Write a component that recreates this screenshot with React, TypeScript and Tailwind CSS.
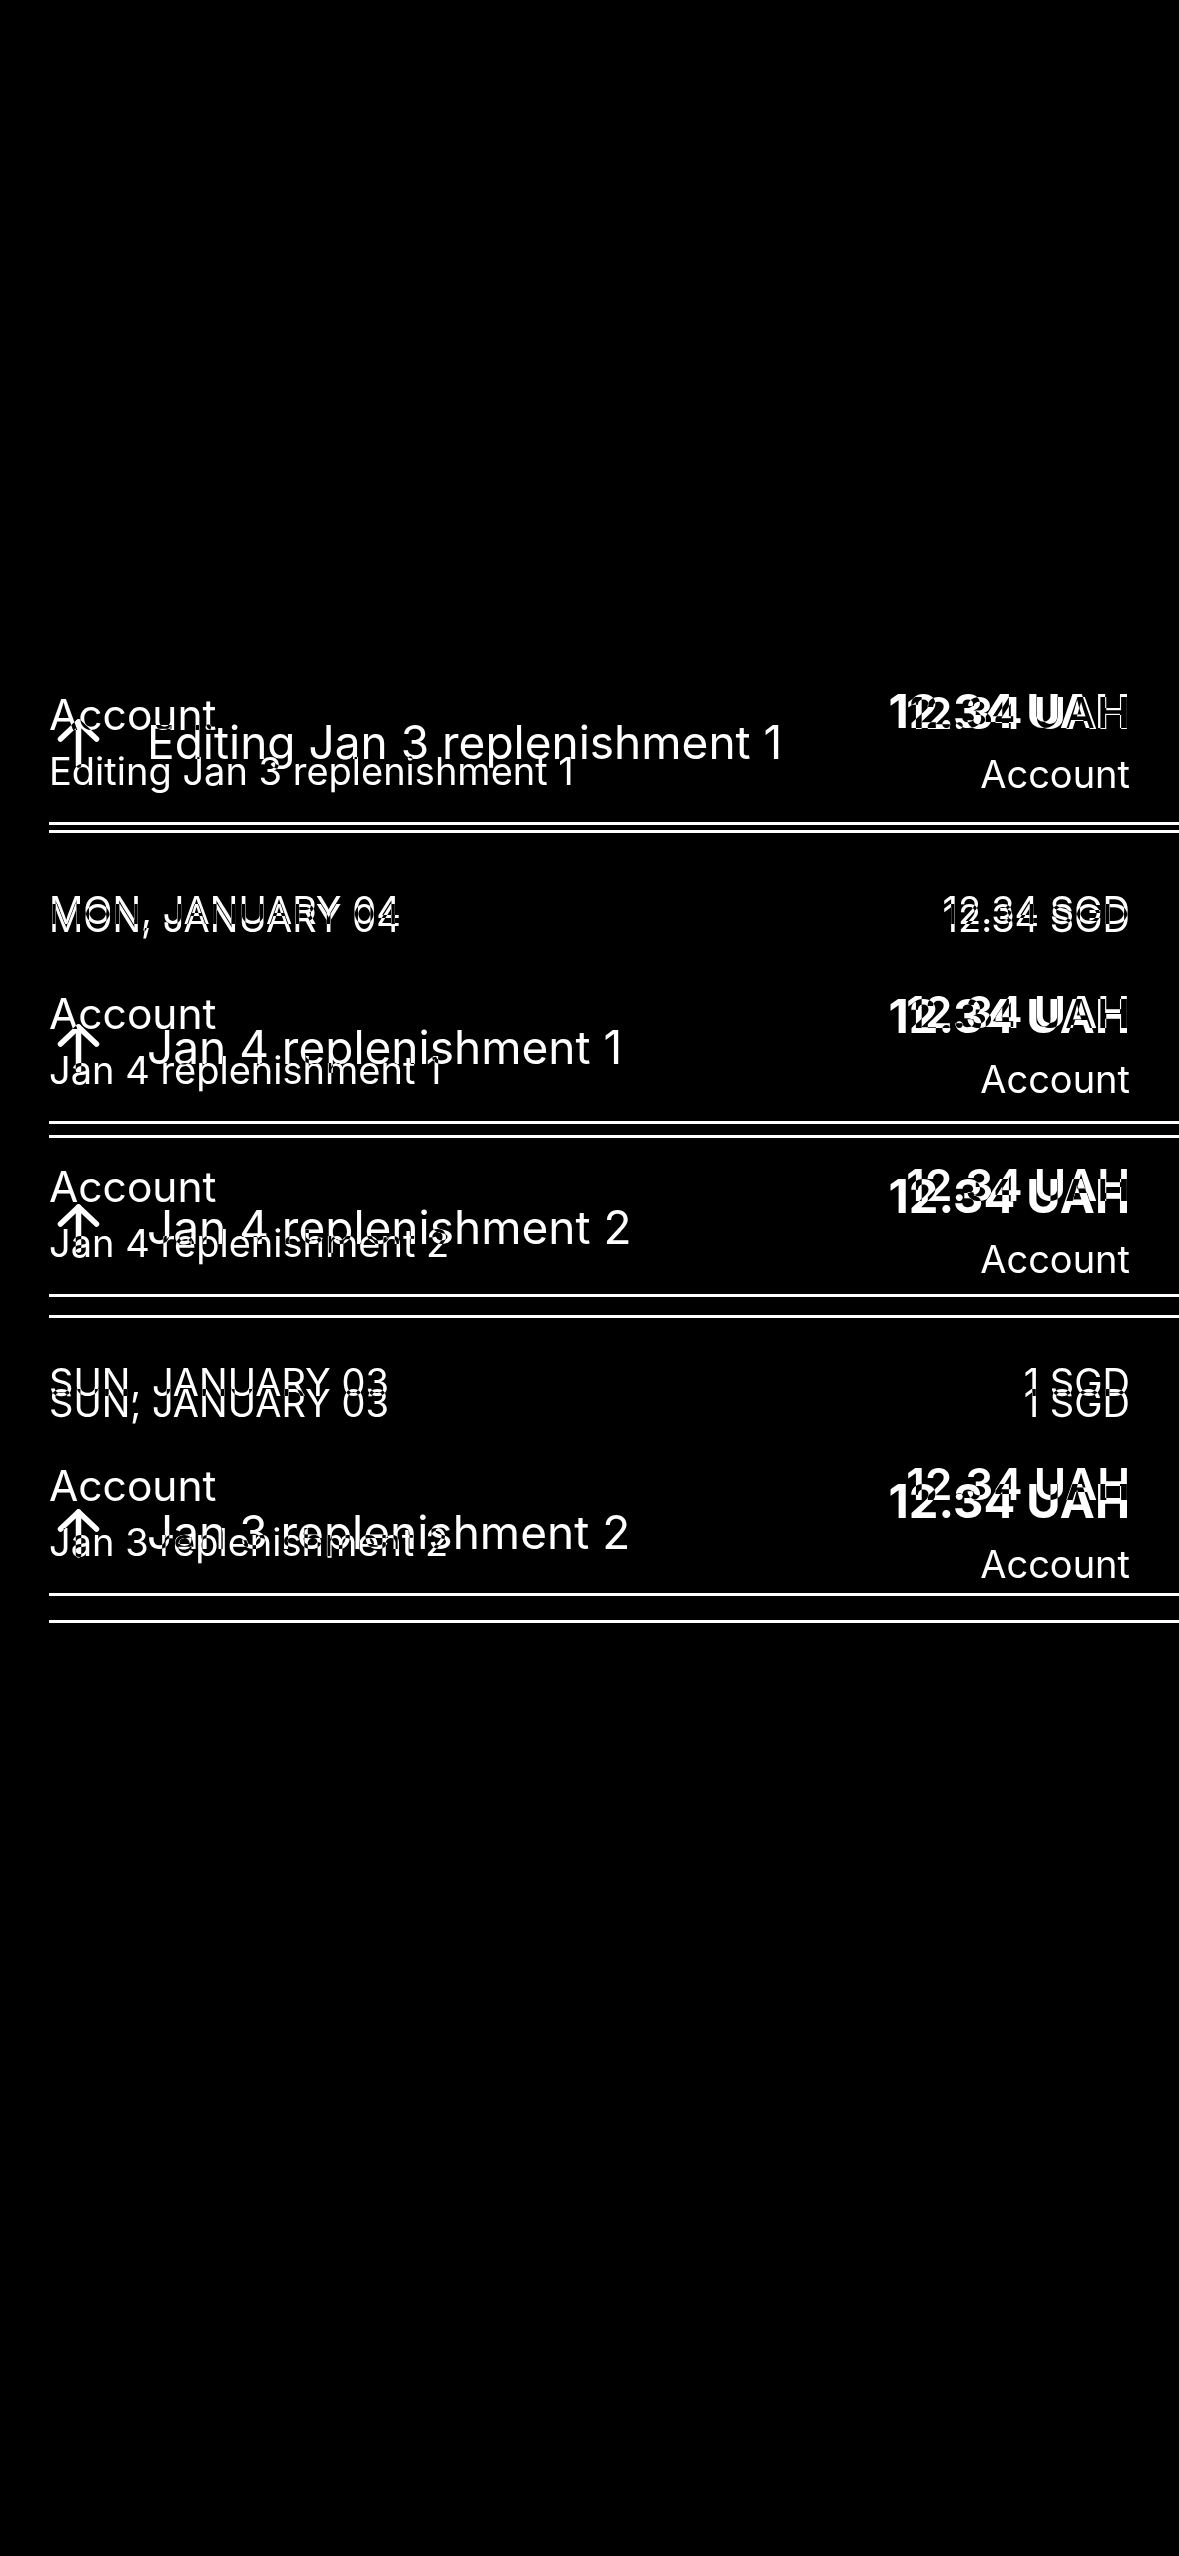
import React from "react";

type Txn = { desc: string; amount: string };
type Section = { date: string; total: string; items: Txn[] };

const sections: Section[] = [
  { date: "", total: "", items: [{ desc: "Editing Jan 3 replenishment 1", amount: "12.34 UAH" }] },
  {
    date: "MON, JANUARY 04",
    total: "12.34 SGD",
    items: [
      { desc: "Jan 4 replenishment 1", amount: "12.34 UAH" },
      { desc: "Jan 4 replenishment 2", amount: "12.34 UAH" },
    ],
  },
  { date: "SUN, JANUARY 03", total: "1 SGD", items: [{ desc: "Jan 3 replenishment 2", amount: "12.34 UAH" }] },
];

function ArrowUp() {
  return (
    <svg width="43" height="50" viewBox="0 0 43 50" fill="none" stroke="currentColor" strokeWidth="5.5" strokeLinecap="round" strokeLinejoin="round">
      <path d="M21.5 4V47" />
      <path d="M3.5 21L21.5 4L39.5 21" />
    </svg>
  );
}

function Separator() {
  return <div className="ml-[49px] h-[3px] bg-white" />;
}

function Header({ date, total, pad }: { date: string; total: string; pad: string }) {
  return (
    <div className={`flex items-end justify-between px-[49px] text-[38px] leading-[44px] ${pad}`}>
      <span>{date}</span>
      <span>{total}</span>
    </div>
  );
}

// list layout: account + note on the left, amount on the right
function ListRow({ t }: { t: Txn }) {
  return (
    <>
      <div className="h-[170px] flex justify-between px-[49px]">
        <div className="pt-[35px]">
          <div className="text-[42.5px] leading-[56px]">Account</div>
          <div className="text-[38px] leading-[56px] whitespace-nowrap">{t.desc}</div>
        </div>
        <div className="pt-[33px] text-right">
          <div className="text-[44px] leading-[56px] font-semibold">{t.amount}</div>
        </div>
      </div>
      <Separator />
    </>
  );
}

// compact layout: icon, title, amount + account
function CompactRow({ t }: { t: Txn }) {
  return (
    <>
      <div className="h-[177px] flex justify-between pl-[57px] pr-[49px]">
        <div className="flex items-start">
          <div className="pt-[65px]">
            <ArrowUp />
          </div>
          <div className="pl-[47px] pt-[59px] text-[46px] leading-[60px] whitespace-nowrap">{t.desc}</div>
        </div>
        <div className="pt-[30px] text-right">
          <div className="text-[47px] leading-[56px] font-bold">{t.amount}</div>
          <div className="text-[38px] leading-[70px]">Account</div>
        </div>
      </div>
      <Separator />
    </>
  );
}

export default function App() {
  return (
    <div className="relative isolate min-h-screen bg-black text-white font-['Inter',sans-serif] overflow-hidden">
      <div className="pt-[652px]">
        {sections.map((s, i) => (
          <div key={i}>
            {s.date && <Header date={s.date} total={s.total} pad="h-[126px] pb-[19px]" />}
            {s.items.map((t, j) => (
              <ListRow key={j} t={t} />
            ))}
          </div>
        ))}
      </div>
      <div className="absolute inset-x-0 top-0 pt-[653px] mix-blend-difference">
        {sections.map((s, i) => (
          <div key={i}>
            {s.date && <Header date={s.date} total={s.total} pad="h-[125px] pb-[18px]" />}
            {s.items.map((t, j) => (
              <CompactRow key={j} t={t} />
            ))}
          </div>
        ))}
      </div>
    </div>
  );
}
